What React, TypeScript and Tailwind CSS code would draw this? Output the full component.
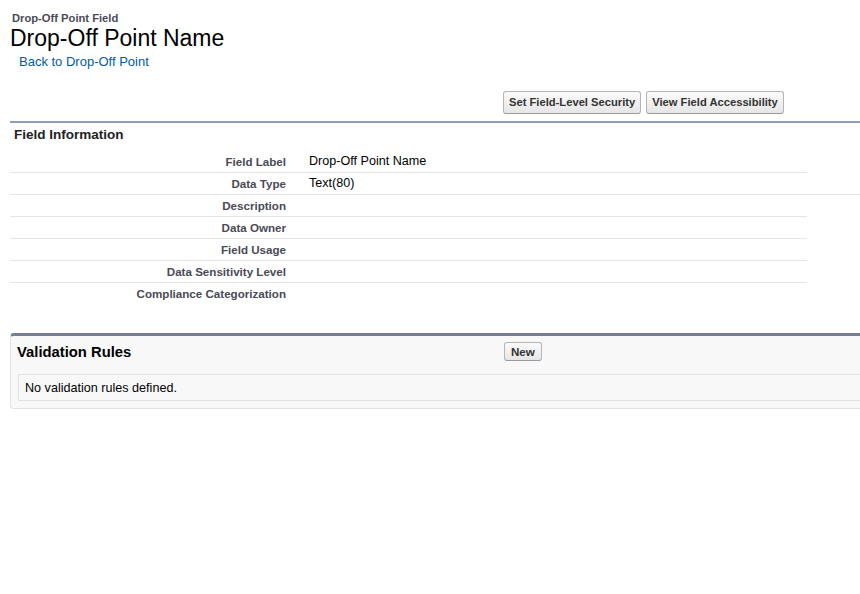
import React from "react";

const rows: { label: string; value?: string; wide?: boolean }[] = [
  { label: "Field Label", value: "Drop-Off Point Name" },
  { label: "Data Type", value: "Text(80)", wide: true },
  { label: "Description" },
  { label: "Data Owner" },
  { label: "Field Usage" },
  { label: "Data Sensitivity Level" },
  { label: "Compliance Categorization" },
];

const btn =
  "h-[23px] px-[5px] rounded-[3px] border border-[#b5b5b5] border-b-[#9a9a9a] bg-gradient-to-b from-[#fbfbfb] to-[#e6e6e6] text-[11.2px] font-bold text-[#333] leading-[21px]";

export default function App() {
  return (
    <div className="w-[860px] min-h-[594px] overflow-hidden bg-white font-['Liberation_Sans',Arial,sans-serif] text-black">
      <div className="pl-[10px] w-[900px]">
        <div className="pl-[2px] pt-[12px] text-[11.2px] leading-[12px] font-bold text-[#4a4a56]">
          Drop-Off Point Field
        </div>
        <h1 className="text-[23px] leading-[28px] font-normal">Drop-Off Point Name</h1>
        <div className="mt-[2px] pl-[9px] text-[13px] leading-[16px] text-[#015ba7]">
          Back to Drop-Off Point
        </div>

        <div className="mt-[21px] flex gap-[5px] pl-[493px]">
          <button className={btn}>Set Field-Level Security</button>
          <button className={btn}>View Field Accessibility</button>
        </div>

        <div className="mt-[7px] h-[2px] w-[890px] bg-[#8e9dbe]" />
        <div className="h-[28px] pt-[3px] pl-[4px] text-[13.5px] leading-[18px] font-bold text-[#222]">
          Field Information
        </div>

        <div>
          {rows.map((r, i) => {
            const last = i === rows.length - 1;
            return (
              <div
                key={r.label}
                className={
                  "flex " +
                  (last ? "h-[21px] w-[797px]" : "h-[22px] border-b border-[#e6e6e6] ") +
                  (!last && r.wide ? "w-[890px]" : !last ? "w-[797px]" : "")
                }
              >
                <div className="w-[280px] shrink-0 pr-[4px] text-right text-[11.6px] leading-[21px] font-bold text-[#4a4a56]">
                  {r.label}
                </div>
                <div className="pl-[19px] text-[12.6px] leading-[21px] text-black">{r.value ?? ""}</div>
              </div>
            );
          })}
        </div>

        <div className="mt-[29px] w-[890px] rounded-[4px] border-t-[3px] border-t-[#747e96] border-l border-b border-[#e3e3e3] bg-[#f8f8f8]">
          <div className="flex h-[38px] items-start pt-[6px]">
            <div className="w-[493px] shrink-0 pl-[6px] text-[14.8px] leading-[20px] font-bold text-black">
              Validation Rules
            </div>
            <button className="h-[19px] px-[6px] rounded-[3px] border border-[#b5b5b5] border-b-[#9a9a9a] bg-gradient-to-b from-[#fbfbfb] to-[#e6e6e6] text-[11.6px] font-bold text-[#333] leading-[17px]">
              New
            </button>
          </div>
          <div className="ml-[7px] mb-[7px] h-[27px] border border-[#e0e3e5] bg-[#f8f8f8] pl-[6px] text-[12.6px] leading-[26px] text-black">
            No validation rules defined.
          </div>
        </div>
      </div>
    </div>
  );
}
